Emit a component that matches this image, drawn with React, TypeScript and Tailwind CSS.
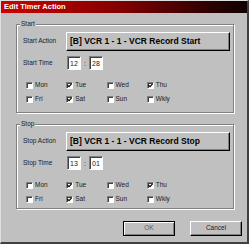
import React from 'react';

const font = { fontFamily: '"Liberation Sans", Arial, sans-serif' };

type Day = { label: string; checked: boolean };

const startDays: Day[] = [
  { label: 'Mon', checked: false },
  { label: 'Tue', checked: true },
  { label: 'Wed', checked: false },
  { label: 'Thu', checked: true },
  { label: 'Fri', checked: false },
  { label: 'Sat', checked: true },
  { label: 'Sun', checked: false },
  { label: 'Wkly', checked: false },
];

function CheckBox({ label, checked }: Day) {
  return (
    <div className="flex items-center w-[40px] h-[7px]">
      <div className="w-[7px] h-[7px] bg-white border-t border-l border-[#808080] border-r border-b border-r-white border-b-white shadow-[inset_1px_1px_0_#404040] flex items-center justify-center shrink-0">
        {checked && (
          <svg width="5" height="5" viewBox="0 0 5 5">
            <path d="M0.5 2.2 L2 3.7 L4.6 0.8" stroke="#000" strokeWidth="1.1" fill="none" />
          </svg>
        )}
      </div>
      <span className="ml-[2px] text-[6.5px] leading-none text-[#202020]">{label}</span>
    </div>
  );
}

function TimeBox({ value }: { value: string }) {
  return (
    <div className="w-[14px] h-[14px] bg-white border-t border-l border-[#808080] border-r border-b border-r-white border-b-white shadow-[inset_1px_1px_0_#404040] flex items-center pl-[2px] text-[7px] leading-none text-[#202020]">
      {value}
    </div>
  );
}

function Group({
  title,
  action,
  timeLabel,
  actionLabel,
  hour,
  minute,
  className,
}: {
  title: string;
  action: string;
  timeLabel: string;
  actionLabel: string;
  hour: string;
  minute: string;
  className: string;
}) {
  return (
    <div className={`relative ml-[15px] w-[218px] border border-[#808080] shadow-[inset_1px_1px_0_#fff,1px_1px_0_#fff] ${className}`}>
      <span className="absolute -top-[5px] left-[3px] bg-[#c0c0c0] px-[1px] text-[6.5px] leading-[8px] text-[#202020]">
        {title}
      </span>
      <div className="flex items-center pl-[6px] mt-[7px]">
        <span className="w-[43px] text-[6.5px] leading-none text-[#202020]">{actionLabel}</span>
        <div className="w-[164px] h-[19px] bg-[#c0c0c0] border border-t-white border-l-white border-r-[#000] border-b-[#000] shadow-[inset_-1px_-1px_0_#808080] flex items-center pl-[3px]">
          <span className="text-[8.5px] font-bold leading-none text-black whitespace-nowrap">{action}</span>
        </div>
      </div>
      <div className="flex items-center pl-[6px] mt-[5px]">
        <span className="w-[44px] text-[6.5px] leading-none text-[#202020]">{timeLabel}</span>
        <TimeBox value={hour} />
        <span className="w-[8px] text-center text-[7px] leading-none text-[#202020]">:</span>
        <TimeBox value={minute} />
      </div>
      <div className="grid grid-cols-4 pl-[9px] mt-[12px] gap-y-[7px] w-[170px]">
        {startDays.map((d) => (
          <CheckBox key={d.label} {...d} />
        ))}
      </div>
    </div>
  );
}

export default function App() {
  return (
    <div
      className="w-[249px] h-[244px] bg-[#c0c0c0] flex flex-col border-t border-l border-t-[#dfdfdf] border-l-[#dfdfdf] border-r-2 border-b-2 border-r-[#404040] border-b-[#404040]"
      style={font}
    >
      <div className="h-[12px] bg-gradient-to-r from-[#d00000] via-[#800000] to-[#100000] flex items-center pl-[3px] shrink-0">
        <span className="text-white text-[7.5px] font-bold leading-none">Edit Timer Action</span>
      </div>
      <Group
        title="Start"
        actionLabel="Start Action"
        action="[B] VCR 1 - 1 - VCR Record Start"
        timeLabel="Start Time"
        hour="12"
        minute="28"
        className="mt-[11px] h-[89px]"
      />
      <Group
        title="Stop"
        actionLabel="Stop Action"
        action="[B] VCR 1 - 1 - VCR Record Stop"
        timeLabel="Stop Time"
        hour="13"
        minute="01"
        className="mt-[11px] h-[85px]"
      />
      <div className="flex justify-end gap-[15px] pr-[5px] mt-[12px]">
        <button className="w-[52px] h-[15px] border border-black bg-[#c0c0c0] shadow-[inset_1px_1px_0_#fff,inset_-1px_-1px_0_#808080] text-[6.5px] leading-none text-[#606060]">
          OK
        </button>
        <button className="w-[52px] h-[15px] border border-t-white border-l-white border-r-black border-b-black bg-[#c0c0c0] shadow-[inset_-1px_-1px_0_#808080] text-[6.5px] leading-none text-[#202020]">
          Cancel
        </button>
      </div>
    </div>
  );
}
